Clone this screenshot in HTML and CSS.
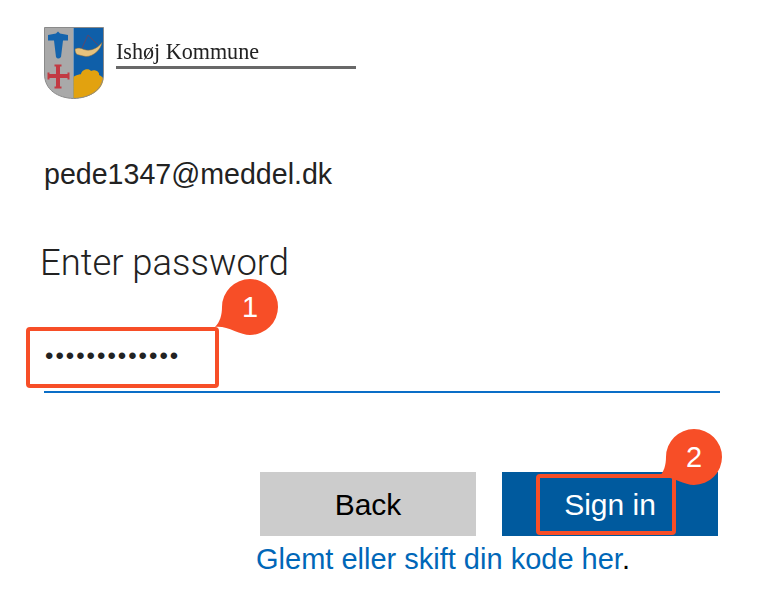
FILE: index.html
```html
<!DOCTYPE html>
<html lang="en">
<head>
  <meta charset="UTF-8" />
  <meta name="viewport" content="width=device-width, initial-scale=1.0" />
  <title>Sign in</title>
  <link rel="stylesheet" href="styles.css">
</head>
<body>
  <main class="page">
    <header class="logo">
      <svg class="shield" viewBox="0 0 60 72" aria-hidden="true">
        <path d="M0.5 0.5H29.5V71.5C14 71 0.5 63 0.5 47Z" fill="#a9a9a9"/>
        <path d="M29.5 0.5H59.5V47C59.5 63 46 71 29.5 71.5Z" fill="#0f5fa9"/>
        <path d="M29.5 71.5V50C33 47 36 48 37 47C38 42 45 41 47 44C51 42 56 45 55 48C57 49 59 50 59.5 52C58 64 46 71 29.5 71.5Z" fill="#e2a20f"/>
        <!-- hammer -->
        <path d="M4 8L12 6.5L14 4.5L16 6.5L24 8V13.5H19L17 30Q14 33 12 30L10 13.5H4Z" fill="#1464ad"/>
        <!-- cross -->
        <path d="M14 39V60M5 49H24" fill="none" stroke="#c23a43" stroke-width="4"/>
        <path d="M10.5 38.5H17.5M10.5 60.5H17.5M4.5 45.5V52.5M24.5 45.5V52.5" fill="none" stroke="#c23a43" stroke-width="2"/>
        <!-- horn -->
        <path d="M38 21L44 8L54 18" fill="none" stroke="#7c3d50" stroke-width="0.7"/>
        <path d="M31 22C34 20.5 37 21 40 22.5C46 24.5 53 22 58 15.5C57 22 50 29.5 42 29.5C38 29 36 28 33 27.5C31.5 26 31 24 31 22Z" fill="#e6c27e" stroke="#8d6a35" stroke-width="0.5"/>
        <path d="M0.5 0.5H59.5V47C59.5 63 46 71 29.5 71.5C14 71 0.5 63 0.5 47Z" fill="none" stroke="#8a8a8a" stroke-width="1"/>
      </svg>
      <div class="logo-name">Ishøj Kommune</div>
    </header>

    <p class="account">pede1347@meddel.dk</p>
    <h1 class="title">Enter password</h1>

    <input class="password" type="password" value="1234567890123" aria-label="Password" />

    <div class="buttons">
      <button class="btn btn-back" type="button">Back</button>
      <button class="btn btn-primary" type="button">Sign in</button>
    </div>
    <p class="forgot"><a href="#">Glemt eller skift din kode her</a>.</p>

    <div class="mark mark-password"></div>
    <svg class="badge badge-one" viewBox="0 0 64 62" aria-label="Step 1">
      <path d="M0 48C5 43 7 36 7 28A28 28 0 1 1 35 56C25 56 11 46 0 48Z"/>
      <text x="35" y="38">1</text>
    </svg>

    <div class="mark mark-signin"></div>
    <svg class="badge badge-two" viewBox="0 0 64 62" aria-label="Step 2">
      <path d="M0 48C5 43 7 36 7 28A28 28 0 1 1 35 56C25 56 11 46 0 48Z"/>
      <text x="35" y="38">2</text>
    </svg>
  </main>
</body>
</html>
```

FILE: styles.css
```css
html, body {
  margin: 0;
  background: #fff;
}
.page {
  position: relative;
  width: 758px;
  height: 590px;
  box-sizing: border-box;
  padding: 27px 38px 0 44px;
  overflow: hidden;
  font-family: "Liberation Sans", Arial, sans-serif;
  color: #1a1a1a;
}
.logo {
  display: flex;
  align-items: flex-start;
  gap: 12px;
  height: 72px;
}
.shield {
  width: 60px;
  height: 72px;
  filter: blur(0.4px);
}
.logo-name {
  width: 240px;
  margin-top: 13px;
  padding-bottom: 3px;
  border-bottom: 3px solid #686868;
  font-family: "Liberation Serif", serif;
  font-size: 22.1px;
  line-height: 23px;
  color: #222;
  filter: blur(0.3px);
}
.account {
  margin: 57px 0 0;
  font-size: 28.6px;
  line-height: 36px;
  color: #222;
}
.title {
  margin: 49px 0 0 -4px;
  font-family: Roboto, sans-serif;
  font-size: 36.4px;
  font-weight: 300;
  line-height: 44px;
  color: #222;
}
.password {
  display: block;
  box-sizing: border-box;
  width: 676px;
  height: 64px;
  margin-top: 44px;
  padding: 0 0 8px 1px;
  border: 0;
  border-bottom: 2px solid #0a6ec7;
  outline: 0;
  font-family: "Liberation Sans", Arial, sans-serif;
  font-size: 24px;
  letter-spacing: 2px;
  color: #222;
  background: transparent;
}
.buttons {
  display: flex;
  gap: 26px;
  margin-top: 79px;
  margin-left: 216px;
}
.btn {
  width: 216px;
  height: 64px;
  border: 0;
  padding: 2px 0 0;
  font-family: "Liberation Sans", Arial, sans-serif;
  font-size: 30px;
}
.btn-back {
  background: #cccccc;
  color: #000;
}
.btn-primary {
  background: #005a9e;
  color: #fff;
}
.forgot {
  margin: 6px 0 0 212px;
  font-size: 29px;
  line-height: 34px;
  color: #000;
}
.forgot a {
  color: #0067b8;
  text-decoration: none;
}
.mark {
  position: absolute;
  box-sizing: border-box;
  border: 4px solid #f74e27;
  border-radius: 4px;
}
.mark-password {
  left: 26px;
  top: 327px;
  width: 193px;
  height: 61px;
}
.mark-signin {
  left: 536px;
  top: 474px;
  width: 140px;
  height: 61px;
}
.badge {
  position: absolute;
  width: 64px;
  height: 62px;
  fill: #f74e27;
}
.badge text {
  font-family: "Liberation Sans", Arial, sans-serif;
  font-size: 29px;
  text-anchor: middle;
  fill: #fff;
}
.badge-one {
  left: 215px;
  top: 279px;
}
.badge-two {
  left: 659px;
  top: 429px;
}
```
